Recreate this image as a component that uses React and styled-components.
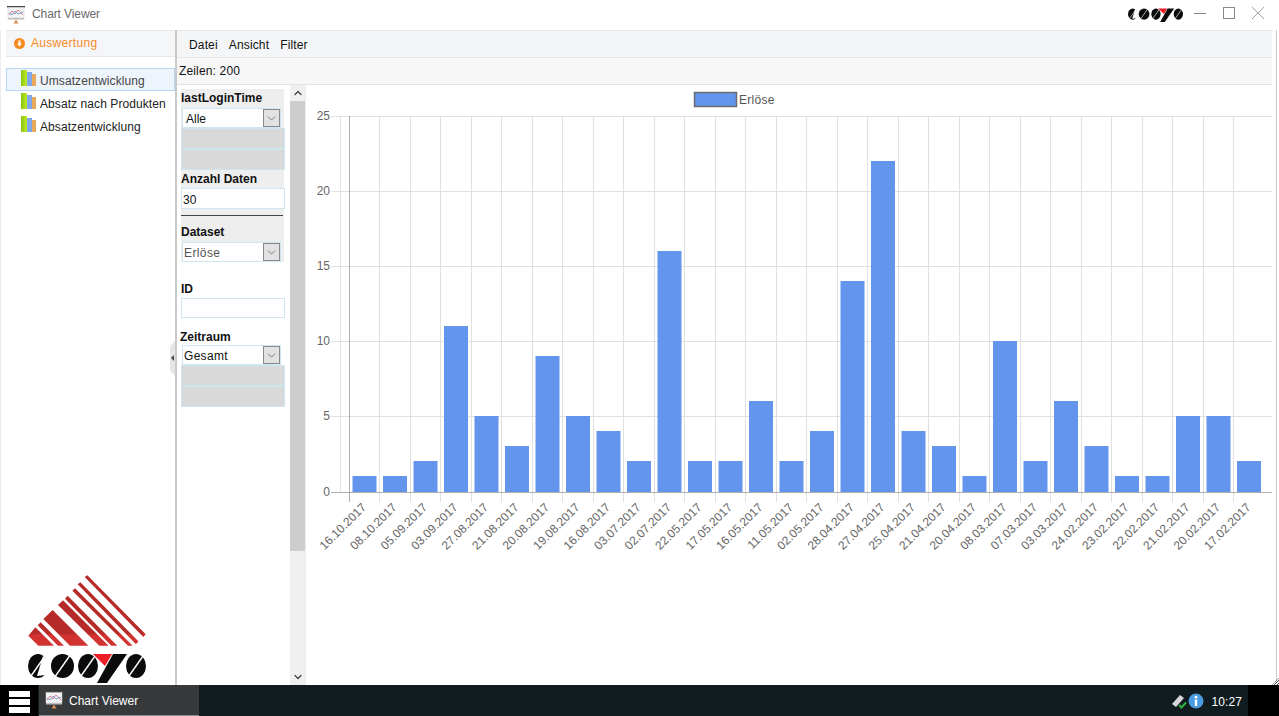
import styled, { createGlobalStyle } from "styled-components";
import { ChevronDown, ChevronUp } from "lucide-react";

const GlobalStyle = createGlobalStyle`
  html, body {
    margin: 0;
    padding: 0;
    overflow: hidden;
    background: #fff;
    font-family: "Liberation Sans", Arial, sans-serif;
    font-size: 12px;
  }
`;

const Page = styled.div`
  width: 1279px;
  height: 716px;
  display: flex;
  flex-direction: column;
`;

const TitleBar = styled.div`
  height: 30px;
  display: flex;
  align-items: center;
  padding-left: 7px;
  flex-shrink: 0;
`;

const TitleText = styled.span`
  margin: 0 0 2px 7px;
  color: #6a6a6a;
  font-size: 12px;
  letter-spacing: -0.1px;
`;

const WindowLogo = styled.div`
  margin-left: auto;
  width: 55px;
  height: 15px;
  display: flex;
`;

const WindowButtons = styled.div`
  display: flex;
  align-items: center;
  gap: 17px;
  margin: 0 15px 4px 11px;
  color: #8a8a8a;
`;

const Main = styled.div`
  flex: 1;
  display: flex;
  min-height: 0;
`;

const LeftGutter = styled.div`
  width: 5px;
  border-left: 1px solid #ececec;
`;

const Sidebar = styled.aside`
  width: 169px;
  display: flex;
  flex-direction: column;
`;

const SidebarHeader = styled.div`
  box-sizing: border-box;
  height: 27px;
  background: #f5f6f8;
  border-top: 1px solid #e6e6e6;
  border-bottom: 1px solid #e6e6e6;
  display: flex;
  align-items: center;
  gap: 6px;
  padding: 0 0 2px 8px;
  color: #f58a1f;
  font-size: 12px;
  letter-spacing: 0.3px;
`;

const OrangeDot = styled.span`
  width: 11px;
  height: 11px;
  display: flex;
  margin-top: 1px;
`;

const Tree = styled.ul`
  list-style: none;
  margin: 11px 0 0;
  padding: 0;
`;

const TreeItem = styled.li`
  box-sizing: border-box;
  height: 23px;
  display: flex;
  align-items: center;
  padding: 2px 0 0 14px;
  gap: 4px;
  color: ${(p) => (p.$selected ? "#444" : "#222")};
  font-size: 12px;
  letter-spacing: 0.08px;
  white-space: nowrap;
  background: ${(p) => (p.$selected ? "#eef4fc" : "transparent")};
  border: 1px solid ${(p) => (p.$selected ? "#b8d6f4" : "transparent")};
  svg {
    margin-top: -5px;
  }
`;

const LogoBlock = styled.div`
  margin-top: auto;
  padding-left: 19px;
  display: flex;
  flex-direction: column;
  gap: 5px;
  svg {
    display: block;
  }
`;

const WordWrap = styled.div`
  margin-left: 3px;
  height: 32px;
`;

const Divider = styled.div`
  position: relative;
  width: 2px;
  background: #c9c9c9;
`;

const CollapseHandle = styled.div`
  position: absolute;
  left: -5px;
  top: 311px;
  width: 5px;
  height: 35px;
  background: #e6e6e6;
  clip-path: polygon(100% 0, 100% 100%, 0 85%, 0 15%);
  &::after {
    content: "";
    position: absolute;
    left: 1px;
    top: 14px;
    border: 3px solid transparent;
    border-right-color: #444;
    border-left-width: 0;
  }
`;

const Content = styled.div`
  flex: 1;
  min-width: 0;
  display: flex;
  flex-direction: column;
`;

const MenuBar = styled.div`
  box-sizing: border-box;
  height: 28px;
  background: #f4f5f7;
  border-top: 1px solid #e6e6e6;
  border-bottom: 1px solid #e6e6e6;
  display: flex;
  align-items: center;
  padding: 2px 0 0 12px;
  gap: 11px;
  color: #111;
  font-size: 12px;
  flex-shrink: 0;
`;

const MenuItem = styled.span`
  letter-spacing: 0.15px;
`;

const RowCount = styled.div`
  height: 26px;
  background: #f7f7f7;
  border-bottom: 1px solid #e4e4e4;
  display: flex;
  align-items: center;
  padding-left: 2px;
  color: #111;
  font-size: 12px;
  letter-spacing: 0.15px;
  flex-shrink: 0;
`;

const Workspace = styled.div`
  flex: 1;
  display: flex;
  min-height: 0;
`;

const FilterPanel = styled.div`
  width: 113px;
  box-sizing: border-box;
  padding: 4px 0 0 4px;
  display: flex;
  flex-direction: column;
`;

const ShadedGroup = styled.div`
  width: 103px;
  height: 173px;
  background: #eeeeee;
  display: flex;
  flex-direction: column;
`;

const FieldLabel = styled.label`
  box-sizing: border-box;
  display: flex;
  align-items: center;
  height: ${(p) => p.$h || 18}px;
  margin-top: ${(p) => p.$top || 0}px;
  margin-left: ${(p) => p.$left || 0}px;
  padding-top: ${(p) => p.$pad || 0}px;
  padding-bottom: ${(p) => p.$padBottom || 0}px;
  font-weight: bold;
  font-size: 12px;
  color: #111;
  white-space: nowrap;
`;

const SelectBox = styled.div`
  box-sizing: border-box;
  width: 99px;
  height: 20px;
  margin-left: 1px;
  flex-shrink: 0;
  background: #fff;
  border: 1px solid #cfe6ee;
  display: flex;
  align-items: center;
  justify-content: space-between;
  padding-left: ${(p) => p.$pad || 1}px;
  color: ${(p) => p.$color || "#111"};
  font-size: 12px;
  letter-spacing: ${(p) => p.$spacing || 0}px;
`;

const SelectValue = styled.span`
  padding-top: 2px;
`;

const SelectArrow = styled.span`
  box-sizing: border-box;
  width: 17px;
  height: 18px;
  background: #e2e2e2;
  border: 1px solid #8a8a8a;
  display: flex;
  align-items: center;
  justify-content: center;
  color: #444;
`;

const ListRow = styled.div`
  box-sizing: border-box;
  width: 104px;
  height: 21px;
  flex-shrink: 0;
  background: #d9d9d9;
  border: 1px solid #cfe6ee;
`;

const TextInput = styled.div`
  box-sizing: border-box;
  width: 104px;
  height: ${(p) => p.$h || 21}px;
  flex-shrink: 0;
  background: #fff;
  border: 1px solid #cfe6ee;
  display: flex;
  align-items: center;
  padding: 2px 0 0 1px;
  color: #111;
  font-size: 12px;
`;

const Rule = styled.hr`
  width: 102px;
  height: 1px;
  margin: 6px 0 0;
  border: 0;
  background: #444;
`;

const ScrollTrack = styled.div`
  position: relative;
  width: 15px;
  background: #f0f0f0;
  display: flex;
  flex-direction: column;
  align-items: center;
  color: #444;
`;

const ScrollEnd = styled.div`
  height: 16px;
  margin-top: ${(p) => (p.$bottom ? "auto" : "0")};
  display: flex;
  align-items: center;
  justify-content: center;
  flex-shrink: 0;
`;

const ScrollThumb = styled.div`
  width: 15px;
  height: 450px;
  background: #cdcdcd;
  flex-shrink: 0;
`;

const ChartPanel = styled.div`
  flex: 1;
  min-width: 0;
  border-left: 1px solid #eeeeee;
  svg {
    display: block;
  }
`;

const RightEdge = styled.div`
  position: relative;
  width: 7px;
  box-sizing: border-box;
  padding-right: 2px;
  &::before {
    content: "";
    display: block;
    width: 100%;
    height: 100%;
    border-right: 1px solid #c9c9c9;
    box-sizing: border-box;
  }
`;

const ResizeGrip = styled.div`
  position: absolute;
  right: 0;
  bottom: 0;
  width: 7px;
  height: 7px;
  background: repeating-linear-gradient(135deg, #555 0 1px, #fff 1px 2px);
  clip-path: polygon(100% 0, 100% 100%, 0 100%);
`;

const Taskbar = styled.div`
  height: 31px;
  flex-shrink: 0;
  background: #101c20;
  display: flex;
  align-items: stretch;
  color: #fff;
`;

const MenuButton = styled.div`
  width: 38px;
  box-sizing: border-box;
  padding-top: 2px;
  background: #000;
  display: flex;
  flex-direction: column;
  align-items: center;
  justify-content: center;
  gap: 2px;
`;

const MenuBarLine = styled.span`
  width: 21px;
  height: 6px;
  background: #fff;
`;

const TaskTab = styled.div`
  box-sizing: border-box;
  width: 160px;
  margin-left: 1px;
  background: #37393b;
  border-bottom: 1px solid #8a8c8e;
  display: flex;
  align-items: center;
  gap: 6px;
  padding-left: 6px;
  font-size: 12px;
`;

const TabLabel = styled.span`
  margin-top: 2px;
`;

const Tray = styled.div`
  margin-left: auto;
  display: flex;
  align-items: center;
`;

const InfoIcon = styled.svg`
  margin-left: 1px;
`;

const Clock = styled.span`
  margin: 2px 6px 0 7px;
  font-size: 12px;
  letter-spacing: 0.1px;
`;

const TrayEnd = styled.div`
  width: 31px;
  align-self: stretch;
  background: #000;
`;

const bars = [
  ["16.10.2017", 1], ["08.10.2017", 1], ["05.09.2017", 2], ["03.09.2017", 11], ["27.08.2017", 5],
  ["21.08.2017", 3], ["20.08.2017", 9], ["19.08.2017", 5], ["16.08.2017", 4], ["03.07.2017", 2],
  ["02.07.2017", 16], ["22.05.2017", 2], ["17.05.2017", 2], ["16.05.2017", 6], ["11.05.2017", 2],
  ["02.05.2017", 4], ["28.04.2017", 14], ["27.04.2017", 22], ["25.04.2017", 4], ["21.04.2017", 3],
  ["20.04.2017", 1], ["08.03.2017", 10], ["07.03.2017", 2], ["03.03.2017", 6], ["24.02.2017", 3],
  ["23.02.2017", 1], ["22.02.2017", 1], ["21.02.2017", 5], ["20.02.2017", 5], ["17.02.2017", 2],
];

const AXIS_X = 349;
const STEP = 30.5;
const BASE_Y = 492;
const UNIT = 15.04;

const valueY = (v) => Math.floor(BASE_Y - v * UNIT + 0.01);

function BarChart() {
  const ticks = [0, 5, 10, 15, 20, 25];
  return (
    <svg width="966" height="600" viewBox="306 85 966 600" fontFamily="'Liberation Sans', Arial, sans-serif" fontSize="12">
      <rect x="694.5" y="92.5" width="42" height="14" fill="#6495ed" stroke="#6b6b6b" strokeWidth="1.5" />
      <text x="739" y="104" fill="#555" letterSpacing="0.3">Erlöse</text>

      <line x1="340.5" x2="340.5" y1="116" y2="492" stroke="#e2e2e2" />
      {bars.map((_, i) => {
        const x = Math.floor(AXIS_X + STEP * i) + 0.5;
        return i > 0 ? <line key={i} x1={x} x2={x} y1="116" y2="502" stroke="#e0e0e0" /> : null;
      })}
      {ticks.map((t) => {
        const y = valueY(t) + 0.5;
        return (
          <g key={t}>
            {t > 0 && <line x1="331" x2="1272" y1={y} y2={y} stroke="#e0e0e0" />}
            <text x="330" y={y + 3.5} textAnchor="end" fill="#666">{t}</text>
          </g>
        );
      })}
      {bars.map(([label, value], i) => (
        <rect key={label} x={AXIS_X + 3.5 + STEP * i} y={valueY(value)} width="24" height={BASE_Y - valueY(value)} fill="#6495ed" />
      ))}
      <line x1="331" x2="1272" y1="492.5" y2="492.5" stroke="#b0b0b0" />
      <line x1="349.5" x2="349.5" y1="116" y2="502" stroke="#b0b0b0" />
      {bars.map(([label], i) => {
        const x = AXIS_X + 18 + STEP * i;
        return (
          <text key={label} x={x} y="508" textAnchor="end" fill="#666" transform={`rotate(-45 ${x} 508)`}>
            {label}
          </text>
        );
      })}
    </svg>
  );
}

function ChartIcon({ size = 18 }) {
  return (
    <svg width={size} height={size} viewBox="0 0 18 18">
      <rect x="0" y="0" width="18" height="1.5" fill="#444" />
      <rect x="1" y="1.5" width="16" height="10.5" fill="#f4f4f4" stroke="#ccc" strokeWidth="0.5" />
      <polyline points="2,9 5,5 8,8 11,4 16,9" fill="none" stroke="#e0707a" strokeWidth="0.9" />
      <polyline points="2,7 5,9 8,5 11,8 16,6" fill="none" stroke="#6f9ad8" strokeWidth="0.9" />
      <rect x="1" y="12" width="16" height="1.5" fill="#bbb" />
      <path d="M9 13.5 L6.5 17.5 H11.5 Z" fill="#d98a5a" />
    </svg>
  );
}

function BarsIcon() {
  return (
    <svg width="15" height="16" viewBox="0 0 15 16">
      <defs>
        <linearGradient id="lime" x1="0" x2="1" y1="0" y2="0">
          <stop offset="0" stopColor="#86c70a" />
          <stop offset="1" stopColor="#c4e82a" />
        </linearGradient>
      </defs>
      <rect x="0" y="0" width="6" height="16" fill="url(#lime)" />
      <rect x="6" y="2" width="5" height="14" fill="#7fa8ea" />
      <rect x="11" y="4" width="4" height="12" fill="#e8a95a" />
    </svg>
  );
}

// red roof of the company logo, coordinates read off the picture
function LogoRoof() {
  const shapes = [
    "254,52 262,47 437,224 430,232",
    "233,74 241,68 415,245 408,254",
    "217,93 225,86 398,258 384,258",
    "195,117 203,108 352,258 334,258",
    "174,136 189,122 326,258 298,258",
    "130,178 158,151 265,258 210,258",
    "113,197 122,188 192,258 174,258",
    "85,228 106,203 162,258 115,258",
  ];
  return (
    <svg width="123" height="75" viewBox="75 40 369 225">
      <defs>
        <linearGradient id="roof" gradientUnits="userSpaceOnUse" x1="0" x2="0" y1="40" y2="258">
          <stop offset="0.84" stopColor="#b62a27" />
          <stop offset="0.85" stopColor="#d13330" />
        </linearGradient>
      </defs>
      {shapes.map((points) => (
        <polygon key={points} points={points} fill="url(#roof)" />
      ))}
    </svg>
  );
}

function LogoWord({ width = 118, height = 32 }) {
  const discs = [
    { cx: 10, rx: 10 },
    { cx: 34.5, rx: 11.5 },
    { cx: 60, rx: 10 },
    { cx: 108, rx: 10 },
  ];
  return (
    <svg width={width} height={height} viewBox="0 0 118 32">
      {discs.map((d) => (
        <g key={d.cx}>
          <ellipse cx={d.cx} cy="13" rx={d.rx} ry="12" fill="#0b0b0b" />
          <line x1={d.cx + 7} y1="3" x2={d.cx - 7} y2="23" stroke="#fff" strokeWidth="1.4" />
        </g>
      ))}
      <path d="M15 3 L21 7 L21 18 L17 22 L9 23 Z" fill="#fff" />
      <path d="M65 1 H84 L77 13 Z" fill="#ee1c25" />
      <path d="M85 1 H99 L79 30 H69 Z" fill="#0b0b0b" />
    </svg>
  );
}

function DropDown({ value, pad, color, spacing }) {
  return (
    <SelectBox $pad={pad} $color={color} $spacing={spacing}>
      <SelectValue>{value}</SelectValue>
      <SelectArrow>
        <ChevronDown size={13} strokeWidth={1.2} />
      </SelectArrow>
    </SelectBox>
  );
}

export default function App() {
  return (
    <Page>
      <GlobalStyle />
      <TitleBar>
        <ChartIcon />
        <TitleText>Chart Viewer</TitleText>
        <WindowLogo>
          <LogoWord width={55} height={15} />
        </WindowLogo>
        <WindowButtons>
          <svg width="12" height="12" viewBox="0 0 12 12"><line x1="0" x2="12" y1="6.5" y2="6.5" stroke="currentColor" /></svg>
          <svg width="12" height="12" viewBox="0 0 12 12"><rect x="0.5" y="0.5" width="11" height="11" fill="none" stroke="currentColor" /></svg>
          <svg width="12" height="12" viewBox="0 0 12 12"><path d="M0 0 L12 12 M12 0 L0 12" stroke="currentColor" strokeWidth="0.8" /></svg>
        </WindowButtons>
      </TitleBar>
      <Main>
        <LeftGutter />
        <Sidebar>
          <SidebarHeader>
            <OrangeDot>
              <svg width="11" height="11" viewBox="0 0 11 11">
                <circle cx="5.5" cy="5.5" r="5.5" fill="#f58a1f" />
                <path d="M4.5 2.5 H6.5 V5.5 H8 L5.5 8.5 L3 5.5 H4.5 Z" fill="#fff" />
              </svg>
            </OrangeDot>
            Auswertung
          </SidebarHeader>
          <Tree>
            <TreeItem $selected><BarsIcon />Umsatzentwicklung</TreeItem>
            <TreeItem><BarsIcon />Absatz nach Produkten</TreeItem>
            <TreeItem><BarsIcon />Absatzentwicklung</TreeItem>
          </Tree>
          <LogoBlock>
            <LogoRoof />
            <WordWrap>
              <LogoWord />
            </WordWrap>
          </LogoBlock>
        </Sidebar>
        <Divider>
          <CollapseHandle />
        </Divider>
        <Content>
          <MenuBar>
            <MenuItem>Datei</MenuItem>
            <MenuItem>Ansicht</MenuItem>
            <MenuItem>Filter</MenuItem>
          </MenuBar>
          <RowCount>Zeilen: 200</RowCount>
          <Workspace>
            <FilterPanel>
              <ShadedGroup>
                <FieldLabel $h={19} $padBottom={2}>lastLoginTime</FieldLabel>
                <DropDown value="Alle" pad={3} />
                <ListRow />
                <ListRow />
                <FieldLabel>Anzahl Daten</FieldLabel>
                <TextInput>30</TextInput>
                <Rule />
                <FieldLabel $h={26} $pad={6}>Dataset</FieldLabel>
                <DropDown value="Erlöse" color="#555" spacing={0.4} />
              </ShadedGroup>
              <FieldLabel $top={18} $h={18}>ID</FieldLabel>
              <TextInput $h={20} />
              <FieldLabel $top={11} $h={16} $left={-1}>Zeitraum</FieldLabel>
              <DropDown value="Gesamt" spacing={0.3} />
              <ListRow />
              <ListRow />
            </FilterPanel>
            <ScrollTrack>
              <ScrollEnd><ChevronUp size={12} strokeWidth={2.5} /></ScrollEnd>
              <ScrollThumb />
              <ScrollEnd $bottom><ChevronDown size={12} strokeWidth={2.5} /></ScrollEnd>
            </ScrollTrack>
            <ChartPanel>
              <BarChart />
            </ChartPanel>
          </Workspace>
        </Content>
        <RightEdge>
          <ResizeGrip />
        </RightEdge>
      </Main>
      <Taskbar>
        <MenuButton>
          <MenuBarLine />
          <MenuBarLine />
          <MenuBarLine />
        </MenuButton>
        <TaskTab>
          <ChartIcon />
          <TabLabel>Chart Viewer</TabLabel>
        </TaskTab>
        <Tray>
          <svg width="16" height="16" viewBox="0 0 16 16">
            <path d="M1 11 L9 2 L13 5 L5 14 Z" fill="#d8d8d8" />
            <path d="M8 12 L10.5 14.5 L15 9.5" fill="none" stroke="#2fb344" strokeWidth="2" />
          </svg>
          <InfoIcon width="16" height="16" viewBox="0 0 16 16">
            <circle cx="8" cy="8" r="7.5" fill="#4a9be0" />
            <rect x="6.8" y="6.5" width="2.4" height="6.5" fill="#fff" />
            <circle cx="8" cy="4.2" r="1.4" fill="#fff" />
          </InfoIcon>
          <Clock>10:27</Clock>
          <TrayEnd />
        </Tray>
      </Taskbar>
    </Page>
  );
}
